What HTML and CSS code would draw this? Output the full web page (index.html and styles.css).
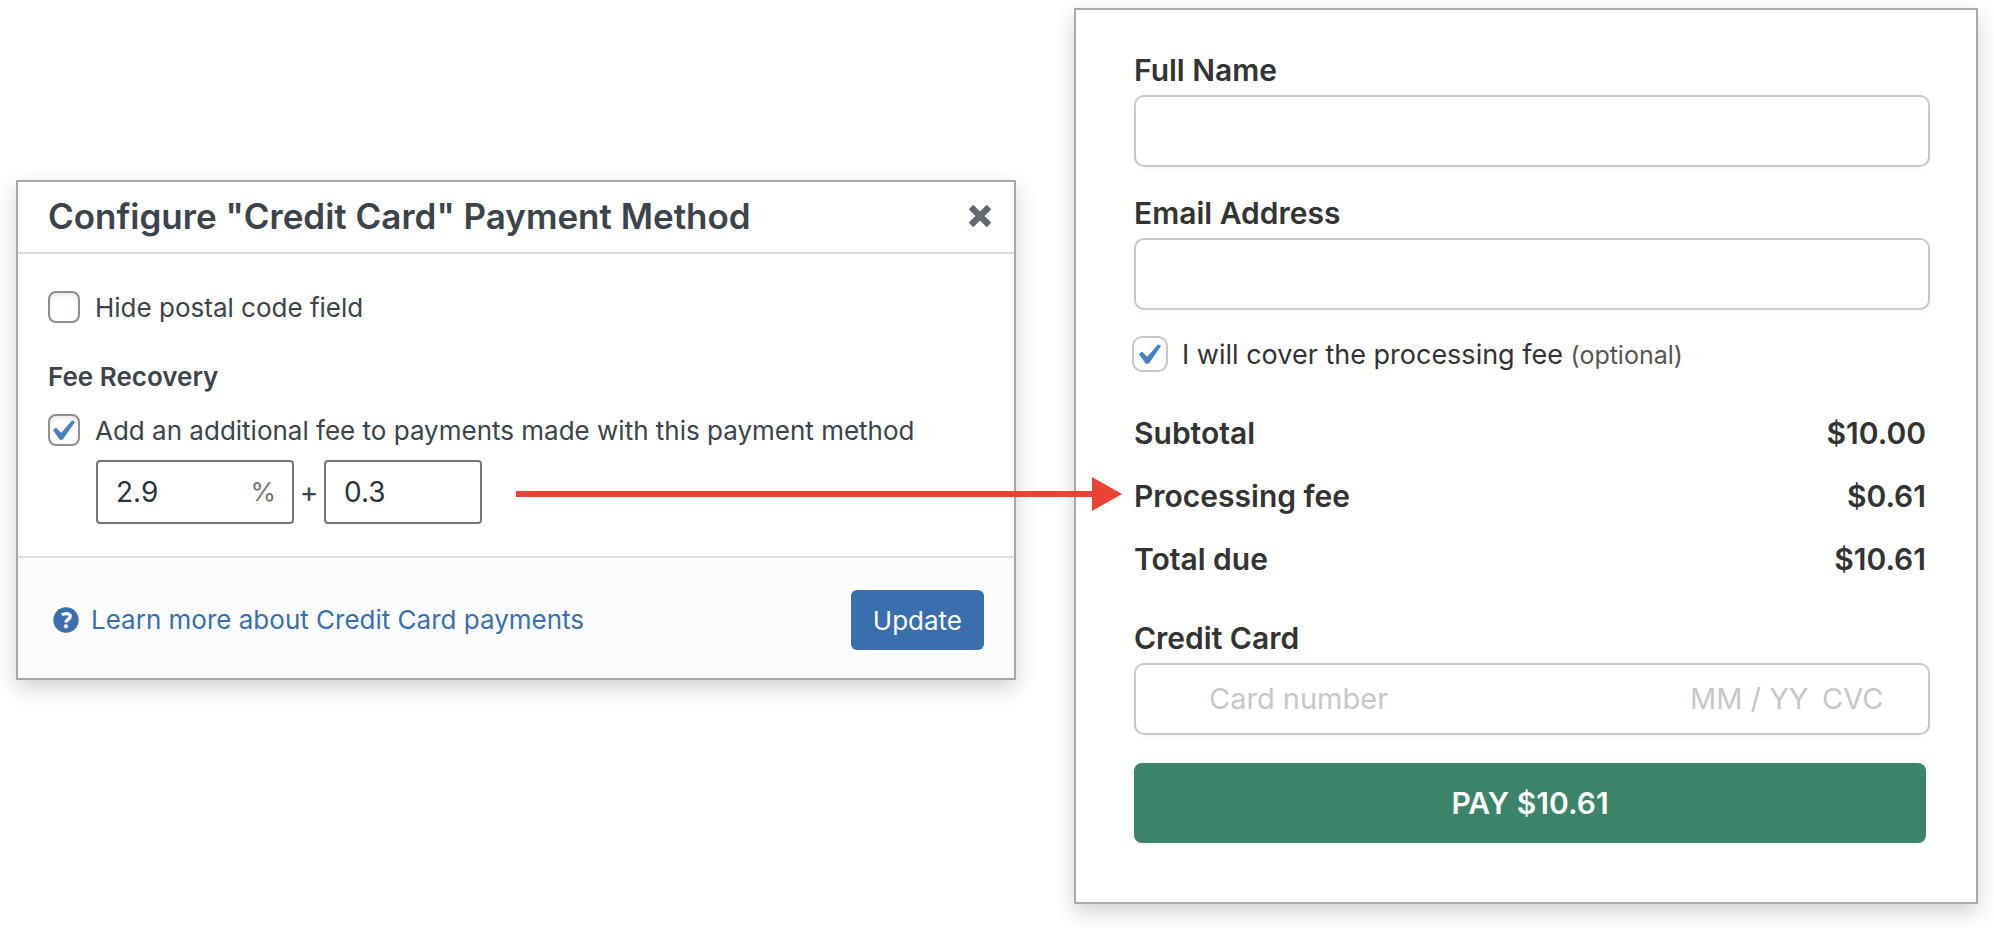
FILE: index.html
```html
<!DOCTYPE html>
<html lang="en">
<head>
<meta charset="utf-8">
<title>Credit Card Payment Method</title>
<link rel="stylesheet" href="styles.css">
</head>
<body>
<main class="stage">
  <section class="card config">
    <header class="config-header">
      <h1 class="config-title">Configure "Credit Card" Payment Method</h1>
      <button class="close" type="button" aria-label="Close">
        <svg width="24" height="24" viewBox="0 0 24 24"><path d="M3 3L21 21M21 3L3 21" stroke="#646970" stroke-width="6.5" fill="none"/></svg>
      </button>
    </header>
    <div class="config-body">
      <div class="option">
        <span class="tick"><input id="hide-postal" type="checkbox"></span>
        <label for="hide-postal">Hide postal code field</label>
      </div>
      <h2 class="config-subtitle">Fee Recovery</h2>
      <div class="option">
        <span class="tick"><input id="add-fee" type="checkbox" checked><svg class="mark" viewBox="5.78 4.89 10.39 9.32"><path d="M14.83 4.89l1.34.94-5.81 8.38H9.02L5.78 9.67l1.34-1.25 2.57 2.4z"/></svg></span>
        <label for="add-fee">Add an additional fee to payments made with this payment method</label>
      </div>
      <div class="fee-row">
        <span class="fee-box percent"><input type="text" value="2.9" aria-label="Fee percentage"><span class="unit">%</span></span>
        <span class="plus">+</span>
        <span class="fee-box amount"><input type="text" value="0.3" aria-label="Fee amount"></span>
        <div class="arrow"><span class="arrow-line"></span><svg width="30" height="34" viewBox="0 0 30 34"><path d="M0 0L30 17L0 34z" fill="#ea4335"/></svg></div>
      </div>
    </div>
    <footer class="config-footer">
      <a class="help" href="#">
        <svg width="26" height="26" viewBox="0 0 26 26"><circle cx="13" cy="13" r="12.7" fill="#3a6fae"/><path d="M8.9 8C11.8 5.9 17.2 6 17.2 9.6C17.2 12.4 13 12.1 13 15.6" stroke="#fff" stroke-width="3.4" fill="none"/><circle cx="13" cy="19.3" r="2.1" fill="#fff"/></svg>
        <span>Learn more about Credit Card payments</span>
      </a>
      <button class="update" type="button">Update</button>
    </footer>
  </section>

  <form class="card checkout">
    <div class="field">
      <label for="name">Full Name</label>
      <input class="box" id="name" type="text">
    </div>
    <div class="field">
      <label for="email">Email Address</label>
      <input class="box" id="email" type="email">
    </div>
    <div class="cover">
      <span class="tick large"><input id="cover" type="checkbox" checked><svg class="mark" viewBox="5.78 4.89 10.39 9.32"><path d="M14.83 4.89l1.34.94-5.81 8.38H9.02L5.78 9.67l1.34-1.25 2.57 2.4z"/></svg></span>
      <label for="cover">I will cover the processing fee <small>(optional)</small></label>
    </div>
    <dl class="totals">
      <div><dt>Subtotal</dt><dd>$10.00</dd></div>
      <div><dt>Processing fee</dt><dd>$0.61</dd></div>
      <div><dt>Total due</dt><dd>$10.61</dd></div>
    </dl>
    <div class="field">
      <label for="card">Credit Card</label>
      <div class="box card-line">
        <input class="number" id="card" type="text" placeholder="Card number">
        <input class="expiry" type="text" placeholder="MM / YY" aria-label="Expiry date">
        <input class="cvc" type="text" placeholder="CVC" aria-label="Security code">
      </div>
    </div>
    <button class="pay" type="button">PAY $10.61</button>
  </form>
</main>
</body>
</html>
```
FILE: styles.css
```css
* { box-sizing: border-box; }

body {
  margin: 0;
  background: #fff;
  font-family: Inter, "Liberation Sans", sans-serif;
}

h1, h2, dl, dd { margin: 0; }

input, button { font: inherit; color: inherit; }

button { border: 0; cursor: pointer; }

.stage {
  display: grid;
  grid-template-columns: 1000fr 904fr;
  gap: 58px;
  align-items: start;
  padding: 8px 16px 24px;
}

.card {
  background: #fff;
  border: 2px solid #a8a8a8;
  box-shadow: 0 8px 20px rgba(0, 0, 0, 0.18);
}

.config {
  margin-top: 172px;
  color: #3c434a;
  font-size: 26px;
  line-height: 32px;
}

.config-header {
  display: flex;
  align-items: center;
  justify-content: space-between;
  padding: 12px 22px 14px 30px;
  border-bottom: 2px solid #dcdcde;
}

.config-title {
  font-size: 35px;
  font-weight: 600;
  line-height: 44px;
}

.close {
  display: flex;
  padding: 0;
  background: none;
}

.config-body { padding: 36px 30px 32px; }

.option {
  display: flex;
  align-items: center;
  gap: 15px;
}

.option label { padding-top: 2px; }

.tick {
  display: grid;
  place-items: center;
  flex: none;
}

.tick input,
.tick .mark { grid-area: 1 / 1; }

.tick input {
  appearance: none;
  width: 32px;
  height: 32px;
  margin: 0;
  border: 2px solid #8c8f94;
  border-radius: 8px;
  background: #fff;
  box-shadow: inset 0 2px 4px rgba(0, 0, 0, 0.1);
}

.tick.large input {
  width: 36px;
  height: 36px;
  border-color: #c8c8c8;
  border-radius: 10px;
  box-shadow: none;
}

.mark {
  width: 22px;
  height: 20px;
  fill: #4682c3;
  pointer-events: none;
}

.config-subtitle {
  margin: 37px 0 20px;
  font-size: 26px;
  font-weight: 600;
  line-height: 32px;
}

.fee-row {
  position: relative;
  display: flex;
  align-items: center;
  margin: 13px 0 0 48px;
}

.fee-box {
  display: flex;
  align-items: center;
  height: 64px;
  padding: 0 18px;
  border: 2px solid #757575;
  border-radius: 4px;
  color: #2c3338;
  font-size: 28px;
}

.fee-box input {
  flex: 1;
  min-width: 0;
  padding: 0;
  border: 0;
  background: none;
}

.percent {
  width: 198px;
  padding-right: 16px;
}

.amount { width: 158px; }

.unit {
  color: #757575;
  font-size: 26px;
}

.plus {
  width: 30px;
  font-size: 28px;
  text-align: center;
}

.arrow {
  position: absolute;
  top: 17px;
  left: 420px;
  right: -138px;
  z-index: 1;
  display: flex;
  align-items: center;
  pointer-events: none;
}

.arrow-line {
  flex: 1;
  height: 6px;
  background: #ea4335;
}

.config-footer {
  display: flex;
  align-items: center;
  justify-content: space-between;
  padding: 32px 30px 28px 35px;
  border-top: 2px solid #dcdcde;
  background: #fcfcfc;
}

.help {
  display: flex;
  align-items: center;
  gap: 12px;
  color: #3a6fae;
  text-decoration: none;
}

.update {
  height: 60px;
  padding: 2px 22px 0;
  border-radius: 6px;
  background: #3a6fae;
  color: #fff;
}

.checkout {
  padding: 42px 46px 59px 58px;
  color: #333;
  font-size: 30px;
  line-height: 36px;
}

.field {
  display: flex;
  flex-direction: column;
  gap: 7px;
  margin-bottom: 28px;
  font-weight: 600;
}

.box {
  width: 100%;
  height: 72px;
  padding: 0 20px;
  border: 2px solid #c8c8c8;
  border-radius: 10px;
  background: #fff;
  box-shadow: 0 2px 4px rgba(0, 0, 0, 0.04);
  font-weight: 400;
}

.cover {
  display: flex;
  align-items: center;
  gap: 14px;
  margin: -2px 0 43px -2px;
  font-size: 27px;
}

.cover label { padding-top: 2px; line-height: 34px; }

.cover small {
  color: #555;
  font-size: 25px;
  line-height: 1;
}

.totals {
  display: grid;
  gap: 27px;
  margin-bottom: 43px;
  padding-right: 4px;
  font-weight: 600;
}

.totals div {
  display: flex;
  justify-content: space-between;
}

.card-line {
  display: flex;
  align-items: center;
  padding: 0 44px 0 73px;
  font-size: 29px;
}

.card-line input {
  min-width: 0;
  padding: 0;
  border: 0;
  background: none;
}

.card-line input::placeholder { color: #c7c7c7; opacity: 1; }

.number { flex: 1; }
.expiry { width: 132px; }
.cvc { width: 62px; }

.pay {
  display: block;
  width: calc(100% - 4px);
  height: 80px;
  border-radius: 8px;
  background: #3b846a;
  box-shadow: 0 2px 4px rgba(0, 0, 0, 0.06);
  color: #fff;
  font-weight: 600;
}
```
